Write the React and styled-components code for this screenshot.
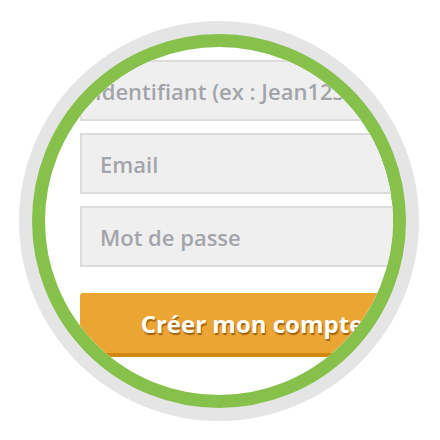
import React from "react";
import styled, { createGlobalStyle } from "styled-components";

const GlobalStyle = createGlobalStyle`
  html, body {
    margin: 0;
    padding: 0;
    background: #ffffff;
  }
  body {
    font-family: "Open Sans", "Liberation Sans", sans-serif;
  }
`;

const Stage = styled.div`
  width: 440px;
  height: 440px;
  padding: 21px 0 0 19px;
  box-sizing: border-box;
  background: #ffffff;
`;

const Halo = styled.div`
  width: 400px;
  height: 400px;
  border-radius: 50%;
  background: #e5e5e5;
  padding: 13px;
  box-sizing: border-box;
`;

const Ring = styled.div`
  width: 374px;
  height: 374px;
  border-radius: 50%;
  border: 13px solid #86c14b;
  box-sizing: border-box;
  background: #ffffff;
  overflow: hidden;
`;

const Form = styled.form`
  display: flex;
  flex-direction: column;
  gap: 12px;
  width: 344px;
  padding: 13px 0 0 35px;
`;

const Field = styled.div`
  height: 61px;
  box-sizing: border-box;
  display: flex;
  align-items: center;
  padding: 0 18px;
  background: #efefef;
  border: 2px solid #dcdcdc;
  color: #a3a5aa;
  font-size: 22px;
  font-weight: 600;
  white-space: nowrap;
  text-indent: ${(p) => p.$indent || 0}px;
`;

const Submit = styled.div`
  margin-top: 14px;
  height: 64px;
  box-sizing: border-box;
  display: flex;
  align-items: center;
  justify-content: center;
  background: #eba532;
  border-bottom: 4px solid #d18812;
  border-radius: 3px;
  color: #ffffff;
  font-size: 24px;
  font-weight: 700;
  white-space: nowrap;
  text-shadow: 1px 2px 1px rgba(140, 82, 8, 0.8);
`;

export default function App() {
  return (
    <>
      <GlobalStyle />
      <Stage>
        <Halo>
          <Ring>
            <Form>
              <Field $indent={-5}>Identifiant (ex : Jean123)</Field>
              <Field>Email</Field>
              <Field>Mot de passe</Field>
              <Submit>Créer mon compte</Submit>
            </Form>
          </Ring>
        </Halo>
      </Stage>
    </>
  );
}
